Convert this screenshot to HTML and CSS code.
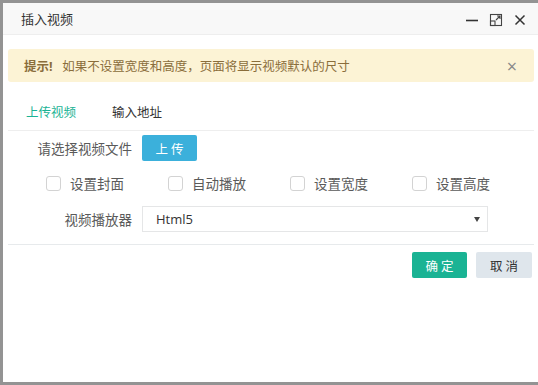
FILE: index.html
```html
<html>
<head>
<title>插入视频</title>
<link rel="stylesheet" href="styles.css">
</head>
<body>

<div class="dialog">
    <div class="dialog-header">
        <span class="dialog-title">插入视频</span>
        <span class="dialog-tools">
            <svg class="tool" width="14" height="14" viewBox="0 0 14 14"><path d="M1 7.5H13" stroke="#333" stroke-width="1.6"/></svg>
            <svg class="tool" width="14" height="14" viewBox="0 0 14 14" fill="none" stroke="#444" stroke-width="1.1">
                <rect x="1.5" y="1.5" width="11" height="11"/>
                <rect x="1.5" y="8" width="4.5" height="4.5"/>
                <path d="M7 7L11 3M8 3H11V6"/>
            </svg>
            <svg class="tool" width="14" height="14" viewBox="0 0 14 14"><path d="M2.5 2.5L11.5 11.5M11.5 2.5L2.5 11.5" stroke="#333" stroke-width="1.5"/></svg>
        </span>
    </div>

    <div class="dialog-body">
        <div class="alert">
            <span><b>提示!</b>&nbsp;&nbsp; 如果不设置宽度和高度，页面将显示视频默认的尺寸</span>
            <span class="alert-close">&times;</span>
        </div>

        <div class="tabs">
            <span class="tab active">上传视频</span>
            <span class="tab">输入地址</span>
        </div>

        <div class="form-row">
            <label class="form-label">请选择视频文件</label>
            <span class="btn btn-info">上 传</span>
        </div>

        <div class="checks">
            <label class="check"><span class="box"></span>设置封面</label>
            <label class="check"><span class="box"></span>自动播放</label>
            <label class="check"><span class="box"></span>设置宽度</label>
            <label class="check"><span class="box"></span>设置高度</label>
        </div>

        <div class="form-row select-row">
            <label class="form-label">视频播放器</label>
            <div class="select">Html5<span class="caret"></span></div>
        </div>

        <div class="dialog-footer">
            <span class="btn btn-primary">确 定</span>
            <span class="btn btn-default">取 消</span>
        </div>
    </div>
</div>

</body>
</html>
```

FILE: styles.css
```css
body {
    margin: 0;
    background-color: #939393;
    font-family: "Open Sans", "Noto Sans CJK SC", sans-serif;
    overflow: hidden;
}

.dialog {
    margin: 3px 0 0 3px;
    width: 535px;
    height: 379px;
    background-color: #fff;
}

.dialog-header {
    height: 31px;
    background-color: #f8f8f8;
    border-bottom: 1px solid #eee;
    display: flex;
    align-items: center;
    justify-content: space-between;
    padding: 0 0 0 18px;
}

.dialog-title {
    font-size: 13px;
    color: #333;
}

.dialog-tools {
    display: flex;
    gap: 10px;
    margin-right: 11px;
    margin-top: 2px;
}

.dialog-body {
    padding: 14px 4px 0 5px;
}

.alert {
    height: 33px;
    box-sizing: border-box;
    background-color: #fcf3d5;
    border-radius: 3px;
    color: #8a6d3b;
    font-size: 12.5px;
    display: flex;
    align-items: center;
    justify-content: space-between;
    padding: 0 17px 0 16px;
}

.alert b {
    font-weight: bold;
}

.alert-close {
    font-size: 18px;
    color: #888;
    line-height: 1;
}

.tabs {
    margin-top: 10px;
    height: 38px;
    border-bottom: 1px solid #eee;
    display: flex;
    align-items: center;
    font-size: 12.5px;
    color: #333;
}

.tab {
    margin-left: 18px;
    margin-right: 18px;
}

.tab.active {
    color: #1ab394;
}

.form-row {
    display: flex;
    align-items: center;
    margin-top: 4px;
}

.form-label {
    width: 124px;
    text-align: right;
    margin-right: 10px;
    font-size: 13.5px;
    color: #5a5a5a;
}

.btn {
    display: inline-flex;
    align-items: center;
    justify-content: center;
    width: 55px;
    height: 26px;
    border-radius: 2px;
    font-size: 12.5px;
}

.btn-info {
    background-color: #3bb0db;
    color: #fff;
}

.checks {
    display: flex;
    margin: 10px 0 0 38px;
    height: 24px;
    align-items: center;
}

.check {
    width: 122px;
    display: flex;
    align-items: center;
    font-size: 13.5px;
    color: #5a5a5a;
}

.box {
    width: 13px;
    height: 13px;
    border: 1px solid #d3d3d3;
    border-radius: 3px;
    margin-right: 9px;
}

.select-row {
    margin-top: 11px;
}

.select {
    width: 346px;
    height: 26px;
    box-sizing: border-box;
    border: 1px solid #e5e6e7;
    display: flex;
    align-items: center;
    justify-content: space-between;
    padding: 0 7px 0 13px;
    font-size: 13px;
    color: #333;
}

.caret {
    width: 0;
    height: 0;
    border-left: 3px solid transparent;
    border-right: 3px solid transparent;
    border-top: 5px solid #444;
}

.dialog-footer {
    margin-top: 12px;
    border-top: 1px solid #e7eaec;
    padding-top: 7px;
    display: flex;
    justify-content: flex-end;
    gap: 9px;
    padding-right: 2px;
}

.btn-primary {
    background-color: #1ab394;
    color: #fff;
}

.btn-default {
    background-color: #dfe6ec;
    color: #333;
    width: 56px;
}
```
